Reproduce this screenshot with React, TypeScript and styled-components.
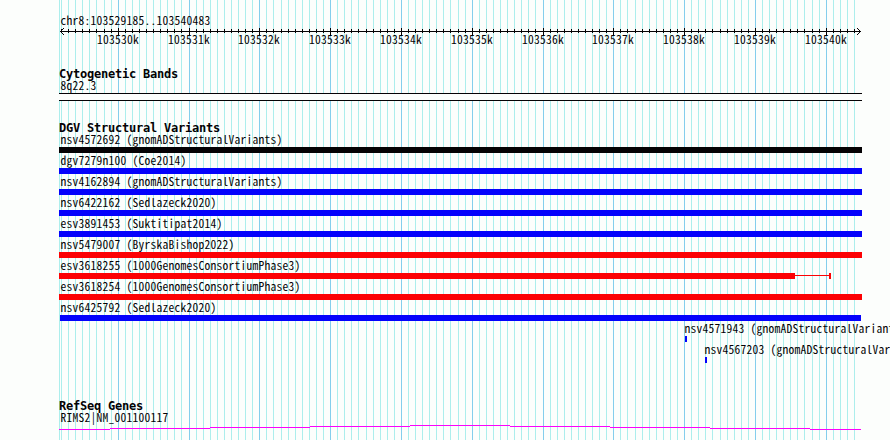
import styled, { createGlobalStyle } from "styled-components";

const START = 103529185;
const LENGTH = 11299;
const WIDTH = 890;
const HEIGHT = 440;

const toX = (bp: number) => Math.round(60 + ((bp - START) * 800) / LENGTH);

const ticks: { bp: number; x: number; major: boolean }[] = [];
for (let bp = 103529200; bp <= 103540400; bp += 100) {
  ticks.push({ bp, x: toX(bp), major: bp % 1000 === 0 });
}

const colors = {
  black: "#040204",
  blue: "#0402fc",
  red: "#fc0204",
};

interface Variant {
  name: string;
  color: string;
  start: number;
  width: number;
  labelStart?: number;
  tail?: number;
}

const variants: Variant[] = [
  { name: "nsv4572692 (gnomADStructuralVariants)", color: colors.black, start: 0, width: 803 },
  { name: "dgv7279n100 (Coe2014)", color: colors.blue, start: 0, width: 803 },
  { name: "nsv4162894 (gnomADStructuralVariants)", color: colors.blue, start: 0, width: 803 },
  { name: "nsv6422162 (Sedlazeck2020)", color: colors.blue, start: 0, width: 803 },
  { name: "esv3891453 (Suktitipat2014)", color: colors.blue, start: 0, width: 803 },
  { name: "nsv5479007 (ByrskaBishop2022)", color: colors.red, start: 0, width: 803 },
  { name: "esv3618255 (1000GenomesConsortiumPhase3)", color: colors.red, start: 0, width: 736, tail: 34 },
  { name: "esv3618254 (1000GenomesConsortiumPhase3)", color: colors.red, start: 0, width: 803 },
  { name: "nsv6425792 (Sedlazeck2020)", color: colors.blue, start: 1, width: 801 },
  { name: "nsv4571943 (gnomADStructuralVariants)", color: colors.blue, start: 626, width: 2, labelStart: 625.5 },
  { name: "nsv4567203 (gnomADStructuralVariants)", color: colors.blue, start: 646, width: 2, labelStart: 645.5 },
];

function Grid() {
  return (
    <GridSvg width={WIDTH} height={HEIGHT} shapeRendering="crispEdges">
      <rect x={59} y={0} width={1} height={HEIGHT} fill="#aceeec" />
      {ticks.map((t) => (
        <rect key={t.bp} x={t.x} y={0} width={1} height={HEIGHT} fill={t.major ? "#84ceec" : "#aceeec"} />
      ))}
    </GridSvg>
  );
}

function Axis() {
  return (
    <AxisSvg width={831} height={22} viewBox="59 27 831 22">
      <g fill={colors.black} shapeRendering="crispEdges">
        <rect x={60} y={31} width={801} height={1} />
        {ticks.map((t) => (
          <rect key={t.bp} x={t.x} y={t.major ? 28 : 29} width={1} height={t.major ? 7 : 4} />
        ))}
        {[1, 2, 3].map((n) => (
          <g key={n}>
            <rect x={60 + n} y={31 - n} width={1} height={1} />
            <rect x={60 + n} y={31 + n} width={1} height={1} />
            <rect x={860 - n} y={31 - n} width={1} height={1} />
            <rect x={860 - n} y={31 + n} width={1} height={1} />
          </g>
        ))}
      </g>
      {ticks
        .filter((t) => t.major)
        .map((t) => (
          <text key={t.bp} x={t.x - 21} y={44} fill={colors.black}>
            {t.bp / 1000}k
          </text>
        ))}
    </AxisSvg>
  );
}

function App() {
  return (
    <>
      <GlobalStyle />
      <Browser>
        <Grid />
        <Panel>
          <Scale>
            <Label>chr8:103529185..103540483</Label>
            <Axis />
          </Scale>
          <Track $height={54}>
            <Title>Cytogenetic Bands</Title>
            <Label>8q22.3</Label>
            <Band />
          </Track>
          <Track $height={278}>
            <Title>DGV Structural Variants</Title>
            {variants.map((v) => (
              <Row key={v.name}>
                <Label $start={v.labelStart}>{v.name}</Label>
                <Feature $start={v.start}>
                  <Bar $width={v.width} $color={v.color} />
                  {v.tail && (
                    <>
                      <Connector $width={v.tail} $color={v.color} />
                      <Bar $width={2} $color={v.color} />
                    </>
                  )}
                </Feature>
              </Row>
            ))}
          </Track>
          <Track $height={41}>
            <Title>RefSeq Genes</Title>
            <Label>RIMS2|NM_001100117</Label>
            <Gene width={802} height={6} viewBox="59 425 802 6">
              <path
                d="M59 429.5H110M110 428.5H210M210 427.5H310M310 426.5H410M410 425.5H510M510 426.5H610M610 427.5H710M710 428.5H810M810 429.5H861"
                stroke="#fc02fc"
                fill="none"
                shapeRendering="crispEdges"
              />
            </Gene>
          </Track>
        </Panel>
      </Browser>
    </>
  );
}

export default App;

const GlobalStyle = createGlobalStyle`
  body {
    margin: 0;
    background: #fcfefc;
  }
`;

const Browser = styled.div`
  position: relative;
  width: ${WIDTH}px;
  height: ${HEIGHT}px;
  overflow: hidden;
  background: #fcfefc;
  color: ${colors.black};
  font-family: "Noto Sans CJK JP", "DejaVu Sans Mono", monospace;
  font-size: 11.5px;
  font-feature-settings: "hwid";
  letter-spacing: 0.25px;
  white-space: pre;
`;

const GridSvg = styled.svg`
  position: absolute;
  top: 0;
  left: 0;
`;

const Panel = styled.div`
  position: relative;
  padding: 15px 0 0 59px;
`;

const Scale = styled.div`
  height: 52px;
`;

const AxisSvg = styled.svg`
  display: block;
`;

const Track = styled.div<{ $height: number }>`
  height: ${(props) => props.$height}px;
`;

const Title = styled.div`
  height: 13px;
  font-family: "DejaVu Sans Mono", monospace;
  font-size: 12px;
  font-weight: bold;
  line-height: 14px;
  letter-spacing: -0.225px;
`;

const Label = styled.div<{ $start?: number }>`
  height: 12px;
  padding-left: ${(props) => props.$start ?? 1.5}px;
  line-height: 10px;
`;

const Band = styled.div`
  width: 803px;
  height: 8px;
  margin-top: 1px;
  box-sizing: border-box;
  border-top: 1px solid ${colors.black};
  border-bottom: 1px solid ${colors.black};
  background: #fcfefc;
`;

const Row = styled.div`
  height: 21px;
`;

const Feature = styled.div<{ $start: number }>`
  display: flex;
  height: 6px;
  margin-top: 1px;
  padding-left: ${(props) => props.$start}px;
`;

const Bar = styled.div<{ $width: number; $color: string }>`
  width: ${(props) => props.$width}px;
  height: 6px;
  background: ${(props) => props.$color};
`;

const Connector = styled(Bar)`
  height: 1px;
  margin-top: 2px;
`;

const Gene = styled.svg`
  display: block;
  margin-top: 1px;
`;
